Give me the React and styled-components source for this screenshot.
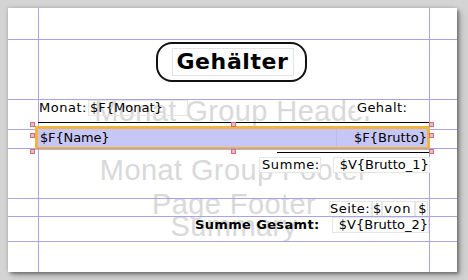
import React from 'react';
import styled, { createGlobalStyle, css } from 'styled-components';

const GUIDE = '#aaa4e4';
const FONT = '"DejaVu Sans", "Liberation Sans", sans-serif';
const GHOST_FONT = '"Liberation Sans", Arial, sans-serif';

const GlobalStyle = createGlobalStyle`
  html, body { margin: 0; padding: 0; background: #d4d4d4; }
  body { width: 468px; height: 280px; overflow: hidden; font-family: ${FONT}; }
`;

const Viewport = styled.div`
  width: 468px;
  height: 280px;
  box-sizing: border-box;
  padding: 8px 0 0 8px;
  background: #d4d4d4;
`;

const Page = styled.div`
  position: relative;
  width: 449px;
  height: 264px;
  background: #fff;
  display: flex;
  flex-direction: column;
  box-shadow: 2px 2px 3px rgba(0, 0, 0, 0.35), 4px 4px 7px rgba(0, 0, 0, 0.18),
    -1px -1px 3px rgba(0, 0, 0, 0.1);
`;

/* page margin guides drawn over the page */
const Guides = styled.div`
  position: absolute;
  top: 0;
  bottom: 0;
  left: 30px;
  width: 392px;
  box-sizing: border-box;
  border-left: 1px solid ${GUIDE};
  border-right: 1px solid ${GUIDE};
  pointer-events: none;
`;

const Band = styled.section`
  position: relative;
  flex: 0 0 ${(p) => p.$h}px;
  height: ${(p) => p.$h}px;
  box-sizing: border-box;
  padding: 0 27px 5px 30px;
  display: flex;
  align-items: center;
  justify-content: center;
  ${(p) =>
    p.$line &&
    css`
      &::before {
        content: '';
        position: absolute;
        left: 0;
        right: 0;
        top: 0;
        height: 1px;
        background: ${GUIDE};
      }
    `}
`;

const BandName = styled.span`
  font: 400 29px/1 ${GHOST_FONT};
  letter-spacing: 0.4px;
  color: #d9d9d9;
  white-space: nowrap;
`;

/* a group of report elements placed on the band canvas */
const ElementRow = styled.div`
  position: absolute;
  left: ${(p) => p.$x}px;
  top: ${(p) => p.$y}px;
  height: 16px;
  display: flex;
  gap: ${(p) => p.$gap ?? 0}px;
`;

const Field = styled.div`
  flex: 0 0 ${(p) => p.$w}px;
  height: 16px;
  box-sizing: border-box;
  border: 1px solid ${(p) => (p.$frame ? '#e6e6e6' : 'transparent')};
  background: ${(p) => (p.$opaque ? '#fff' : 'transparent')};
  padding: 0 ${(p) => p.$pr ?? 0}px 0 ${(p) => p.$pl ?? 1}px;
  font: ${(p) => (p.$bold ? 700 : 400)} 13px / 14px ${FONT};
  letter-spacing: ${(p) => p.$ls ?? 0}px;
  text-align: ${(p) => p.$align || 'left'};
  color: #000;
  white-space: nowrap;
  overflow: ${(p) => (p.$clip ? 'hidden' : 'visible')};
`;

const Rule = styled.div`
  position: absolute;
  left: ${(p) => p.$x}px;
  top: ${(p) => p.$y}px;
  width: ${(p) => p.$w}px;
  height: 1px;
  background: #000;
`;

const TitleFrame = styled.div`
  position: absolute;
  left: 148px;
  top: 3px;
  width: 151px;
  height: 40px;
  box-sizing: border-box;
  border: 2px solid #111;
  border-radius: 16px;
  background: #fff;
  display: flex;
  align-items: center;
  justify-content: center;
  padding: 0 0 0 2px;
`;

const TitleText = styled.div`
  width: 122px;
  height: 28px;
  box-sizing: border-box;
  border: 1px solid #e4e4e4;
  font: 700 22px/26px ${FONT};
  letter-spacing: 0.6px;
  text-align: center;
  color: #000;
  white-space: nowrap;
`;

const Selection = styled.div`
  position: absolute;
  left: 27px;
  top: -3px;
  width: 395px;
  height: 24px;
  box-sizing: border-box;
  border: 3px solid #f1b53f;
  background: #c7c7f7;
  display: flex;
  font: 400 13px/18px ${FONT};
  color: #000;
`;

const SelName = styled.div`
  flex: 1;
  padding-left: 2px;
  letter-spacing: -0.15px;
  white-space: nowrap;
`;

const SelValue = styled.div`
  width: 90px;
  border-left: 1px solid rgba(0, 0, 0, 0.06);
  text-align: right;
  white-space: nowrap;
`;

const Handle = styled.span`
  position: absolute;
  left: ${(p) => p.$x}px;
  top: ${(p) => p.$y}px;
  width: 5px;
  height: 5px;
  box-sizing: border-box;
  border: 1px solid #c9747e;
  background: #f4b7bf;
`;

const handleXs = [22, 223, 421];
const handleYs = [-7, 4, 20];

const L = '{';
const R = '}';

export default function App() {
  return (
    <>
      <GlobalStyle />
      <Viewport>
        <Page>
          <Guides />
          <Band $h={31} />
          <Band $h={60} $line>
            <TitleFrame>
              <TitleText>Gehälter</TitleText>
            </TitleFrame>
          </Band>
          <Band $h={30} $line>
            <BandName>Monat Group Header</BandName>
            <ElementRow $x={30} $y={1}>
              <Field $w={50} $pl={0} $ls={0.5}>Monat:</Field>
              <Field $w={100} $pl={1} $frame>$F{L}Monat{R}</Field>
            </ElementRow>
            <ElementRow $x={347} $y={1}>
              <Field $w={74} $pl={1} $ls={0.4} $opaque>Gehalt:</Field>
            </ElementRow>
            <Rule $x={30} $y={23} $w={391} />
          </Band>
          <Band $h={19} $line>
            <Selection>
              <SelName>$F{L}Name{R}</SelName>
              <SelValue>$F{L}Brutto{R}</SelValue>
            </Selection>
            {handleYs.map((y, yi) =>
              handleXs.map((x, xi) =>
                yi === 1 && xi === 1 ? null : <Handle key={`${xi}-${yi}`} $x={x} $y={y} />
              )
            )}
          </Band>
          <Band $h={50} $line>
            <BandName>Monat Group Footer</BandName>
            <Rule $x={269} $y={4} $w={152} />
            <ElementRow $x={251} $y={9} $gap={12}>
              <Field $w={61} $pl={2} $ls={0.6} $opaque $frame>Summe:</Field>
              <Field $w={97} $align="right" $opaque $frame $clip>$V{L}Brutto_1{R}</Field>
            </ElementRow>
          </Band>
          <Band $h={18} $line>
            <BandName>Page Footer</BandName>
            <ElementRow $x={321} $y={3}>
              <Field $w={43} $pl={0} $ls={0.45} $opaque $frame>Seite:</Field>
              <Field $w={7} $pl={0} $opaque $frame>$</Field>
              <Field $w={33} $pl={1} $ls={1.2} $opaque $frame>von</Field>
              <Field $w={13} $pl={2} $opaque $frame>$</Field>
            </ElementRow>
          </Band>
          <Band $h={25} $line>
            <BandName>Summary</BandName>
            <ElementRow $x={186} $y={1}>
              <Field $w={138} $pl={0} $ls={0.35} $bold>Summe Gesamt:</Field>
              <Field $w={97} $align="right" $opaque $frame $clip>$V{L}Brutto_2{R}</Field>
            </ElementRow>
          </Band>
          <Band $h={31} $line />
        </Page>
      </Viewport>
    </>
  );
}
